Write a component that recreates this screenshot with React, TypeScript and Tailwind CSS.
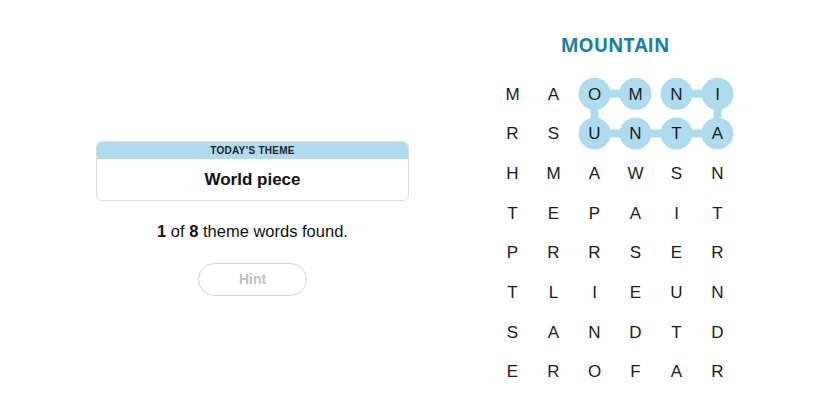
const grid = [
  ["M", "A", "O", "M", "N", "I"],
  ["R", "S", "U", "N", "T", "A"],
  ["H", "M", "A", "W", "S", "N"],
  ["T", "E", "P", "A", "I", "T"],
  ["P", "R", "R", "S", "E", "R"],
  ["T", "L", "I", "E", "U", "N"],
  ["S", "A", "N", "D", "T", "D"],
  ["E", "R", "O", "F", "A", "R"],
];

// found word: MOUNTAIN, as [row, col]
const path: [number, number][] = [
  [0, 3],
  [0, 2],
  [1, 2],
  [1, 3],
  [1, 4],
  [1, 5],
  [0, 5],
  [0, 4],
];

const CELL_W = 41;
const CELL_H = 39.7;

function cx(c: number) {
  return c * CELL_W + CELL_W / 2;
}
function cy(r: number) {
  return r * CELL_H + CELL_H / 2;
}

function Board() {
  return (
    <div className="relative w-[246px]">
      <svg className="absolute inset-0" width={246} height={8 * CELL_H}>
        {path.slice(1).map(([r, c], i) => {
          const [pr, pc] = path[i];
          return (
            <line
              key={i}
              x1={cx(pc)}
              y1={cy(pr)}
              x2={cx(c)}
              y2={cy(r)}
              stroke="#aedcee"
              strokeWidth={8}
            />
          );
        })}
        {path.map(([r, c], i) => (
          <circle key={i} cx={cx(c)} cy={cy(r)} r={16} fill="#aedcee" />
        ))}
      </svg>
      <div className="relative grid grid-cols-6">
        {grid.flat().map((ch, i) => (
          <div
            key={i}
            className="flex h-[39.7px] items-center justify-center pt-[1px] text-[17px] text-[#1a1a1a]"
          >
            {ch}
          </div>
        ))}
      </div>
    </div>
  );
}

export default function App() {
  return (
    <div className="flex h-[413px] w-[825px] bg-white font-['Liberation_Sans',Arial,sans-serif]">
      <div className="ml-[96px] mt-[141px] flex w-[313px] flex-col items-center">
        <div className="w-full overflow-hidden rounded-md border border-[#dcdcdc]">
          <div className="flex h-[17px] items-center justify-center bg-[#aedcee] text-[10px] font-bold tracking-wide text-[#222]">
            TODAY&rsquo;S THEME
          </div>
          <div className="flex h-[41px] items-center justify-center text-[17px] font-bold text-[#111]">
            World piece
          </div>
        </div>
        <p className="mt-[18px] text-[16.5px] text-[#111]">
          <span className="font-bold">1</span> of <span className="font-bold">8</span> theme words found.
        </p>
        <button className="mt-[19px] h-[33px] w-[109px] rounded-full border border-[#d4d4d4] text-[14px] font-semibold text-[#c2c2c2]">
          Hint
        </button>
      </div>
      <div className="ml-[83px] mt-[33px] flex flex-col items-center">
        <h1 className="h-[24px] font-['Open_Sans',sans-serif] text-[19px] font-bold leading-[24px] text-[#1c7fa4]">
          MOUNTAIN
        </h1>
        <div className="mt-[17px]">
          <Board />
        </div>
      </div>
    </div>
  );
}
